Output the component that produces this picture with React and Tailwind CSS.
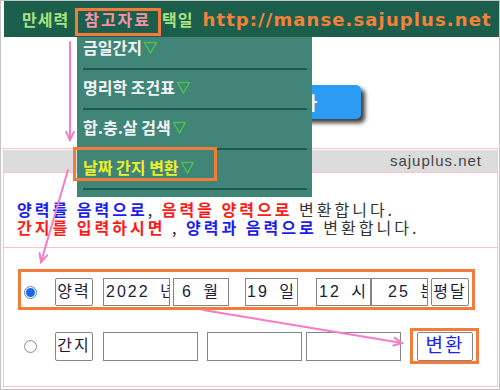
import React from 'react'

const kr = "font-['Noto_Sans_CJK_KR',sans-serif]"
const mixed = "font-['Liberation_Sans','Noto_Sans_CJK_KR',sans-serif]"

function Arrow({ x1, y1, x2, y2 }) {
  const a = Math.atan2(y2 - y1, x2 - x1)
  const L = 9
  const s = 0.45
  const p1 = [x2 - L * Math.cos(a - s), y2 - L * Math.sin(a - s)]
  const p2 = [x2 - L * Math.cos(a + s), y2 - L * Math.sin(a + s)]
  return (
    <g stroke="#f57cc6" strokeWidth="2" fill="none" strokeLinecap="round">
      <line x1={x1} y1={y1} x2={x2} y2={y2} />
      <polyline points={`${p1[0]},${p1[1]} ${x2},${y2} ${p2[0]},${p2[1]}`} />
    </g>
  )
}

function Radio({ checked }) {
  return checked ? (
    <div className="w-[13px] h-[13px] rounded-full border border-[#3d8bf0] bg-white flex items-center justify-center">
      <div className="w-[9px] h-[9px] rounded-full bg-[#1a66e6]" />
    </div>
  ) : (
    <div className="w-[13px] h-[13px] rounded-full border border-[#8a8a8a] bg-white" />
  )
}

function Box({ className = '', children }) {
  return (
    <div className={`h-full border border-[#858585] bg-white overflow-hidden whitespace-nowrap text-[16px] leading-[26px] text-[#1c1c3c] tracking-[2px] [word-spacing:4px] ${mixed} ${className}`}>
      {children}
    </div>
  )
}

function MenuItem({ label, first, active }) {
  return (
    <div className={first ? '' : 'mt-[8px]'}>
      <div className={`h-[18px] flex items-center text-[16px] font-bold whitespace-nowrap ${kr} ${active ? 'text-[#eef02a]' : 'text-[#f4f4f4]'}`}>
        {label}
        <svg width="15" height="13" viewBox="0 0 15 13" className="ml-[1px]">
          <path d="M1.5 1.5 L13.5 1.5 L7.5 12 Z" fill="none" stroke="#4cc24c" strokeWidth="1.5" strokeLinejoin="round" />
        </svg>
      </div>
      <div className="mt-[12px] mr-[5px] border-t-2 border-[#1b5a50]" />
    </div>
  )
}

export default function App() {
  return (
    <div className="relative w-[500px] h-[390px] overflow-hidden bg-white border border-[#c4c4c4]">
      {/* top bar */}
      <div className={`ml-[3px] w-[495px] h-[36px] bg-[#1b5e4b] flex items-center text-[16px] font-bold whitespace-nowrap ${kr}`}>
        <span className="ml-[18px] text-[#a9e37f] tracking-[1px]">만세력</span>
        <span className="ml-[15px] text-[#f494a4] tracking-[2px]">참고자료</span>
        <span className="ml-[11px] text-[#a9e37f] tracking-[1px]">택일</span>
        <span className="ml-[9px] text-[#f5823a] text-[18px] tracking-[1.1px] font-['DejaVu_Sans',sans-serif]">
          http://manse.sajuplus.net
        </span>
      </div>

      {/* white area with button */}
      <div className="h-[111px] pt-[48px]">
        <div className={`ml-[200px] w-[160px] h-[34px] rounded-[5px] bg-[#2b9cf4] shadow-[4px_4px_4px_rgba(0,0,0,0.75)] flex items-center justify-end pr-[44px] text-[#fff8d0] text-[18px] font-bold ${kr}`}>
          사주 검사
        </div>
      </div>

      {/* panel */}
      <div className="ml-[2px] w-[495px] h-[239px] border border-[#ffc0cb]">
        <div className="mt-[1px] h-[22px] bg-[#dcdcdc] flex items-center justify-end pr-[15px] text-[15px] tracking-[1px] text-[#444] font-['Liberation_Sans',sans-serif]">
          sajuplus.net
        </div>
        <div className={`border-t border-b border-[#ffc0cb] h-[76px] pt-[27px] pl-[13px] text-[16px] leading-[18px] tracking-[3px] ${kr}`}>
          <div className="whitespace-nowrap">
            <span className="text-[#1c1cf0] font-bold">양력를 음력으로</span>
            <span className="text-[#222]">, </span>
            <span className="text-[#ff1a1a] font-bold">음력을 양력으로</span>
            <span className="text-[#333]"> 변환합니다.</span>
          </div>
          <div className="whitespace-nowrap">
            <span className="text-[#ff1a1a] font-bold">간지를 입력하시면</span>
            <span className="text-[#222]"> , </span>
            <span className="text-[#1c1cf0] font-bold">양력과 음력으로</span>
            <span className="text-[#333]"> 변환합니다.</span>
          </div>
        </div>
        <div className="pt-[30px]">
          <div className="flex items-center h-[28px]">
            <div className="ml-[20px]"><Radio checked /></div>
            <Box className="ml-[18px] w-[38px] text-center tracking-[0px] rounded-[2px]">양력</Box>
            <Box className="ml-[10px] w-[67px] pl-[2px]">2022 년</Box>
            <Box className="ml-[3px] w-[56px] text-center">6 월</Box>
            <Box className="ml-[16px] w-[53px] text-center">19 일</Box>
            <Box className="ml-[18px] w-[55px] text-center">12 시</Box>
            <Box className="w-[57px] pl-[16px]">25 분</Box>
            <Box className="ml-[3px] w-[38px] text-center tracking-[0px] rounded-[2px]">평달</Box>
          </div>
          <div className="mt-[26px] flex items-center h-[29px]">
            <div className="ml-[20px]"><Radio /></div>
            <Box className="ml-[18px] w-[38px] text-center tracking-[0px] rounded-[2px]">간지</Box>
            <Box className="ml-[10px] w-[95px]" />
            <Box className="ml-[9px] w-[95px]" />
            <Box className="ml-[4px] w-[95px]" />
            <Box className="ml-[16px] w-[56px] text-center text-[19px] text-[#2222ee] tracking-[1px] rounded-[2px]">변환</Box>
          </div>
        </div>
      </div>

      {/* dropdown menu */}
      <div className="absolute left-[76px] top-[36px] w-[235px] h-[160px] bg-[#408578] pl-[6px] pt-[1px]">
        <MenuItem label="금일간지" first />
        <MenuItem label="명리학 조건표" />
        <MenuItem label="합.충.살 검색" />
        <MenuItem label="날짜 간지 변환" active />
      </div>

      {/* highlight boxes */}
      <div className="absolute left-[74px] top-[7px] w-[86px] h-[28px] border-[3px] border-[#f47c3a]" />
      <div className="absolute left-[72px] top-[146px] w-[144px] h-[34px] border-[3px] border-[#f47c3a]" />
      <div className="absolute left-[17px] top-[268px] w-[457px] h-[41px] border-[3px] border-[#f47c3a]" />
      <div className="absolute left-[409px] top-[327px] w-[69px] h-[36px] border-[3px] border-[#f47c3a]" />

      {/* arrows */}
      <svg className="absolute left-[-1px] top-[-1px] pointer-events-none" width="500" height="390">
        <Arrow x1={70} y1={42} x2={70} y2={140} />
        <Arrow x1={68} y1={170} x2={41} y2={262} />
        <Arrow x1={203} y1={310} x2={402} y2={343} />
      </svg>
    </div>
  )
}
